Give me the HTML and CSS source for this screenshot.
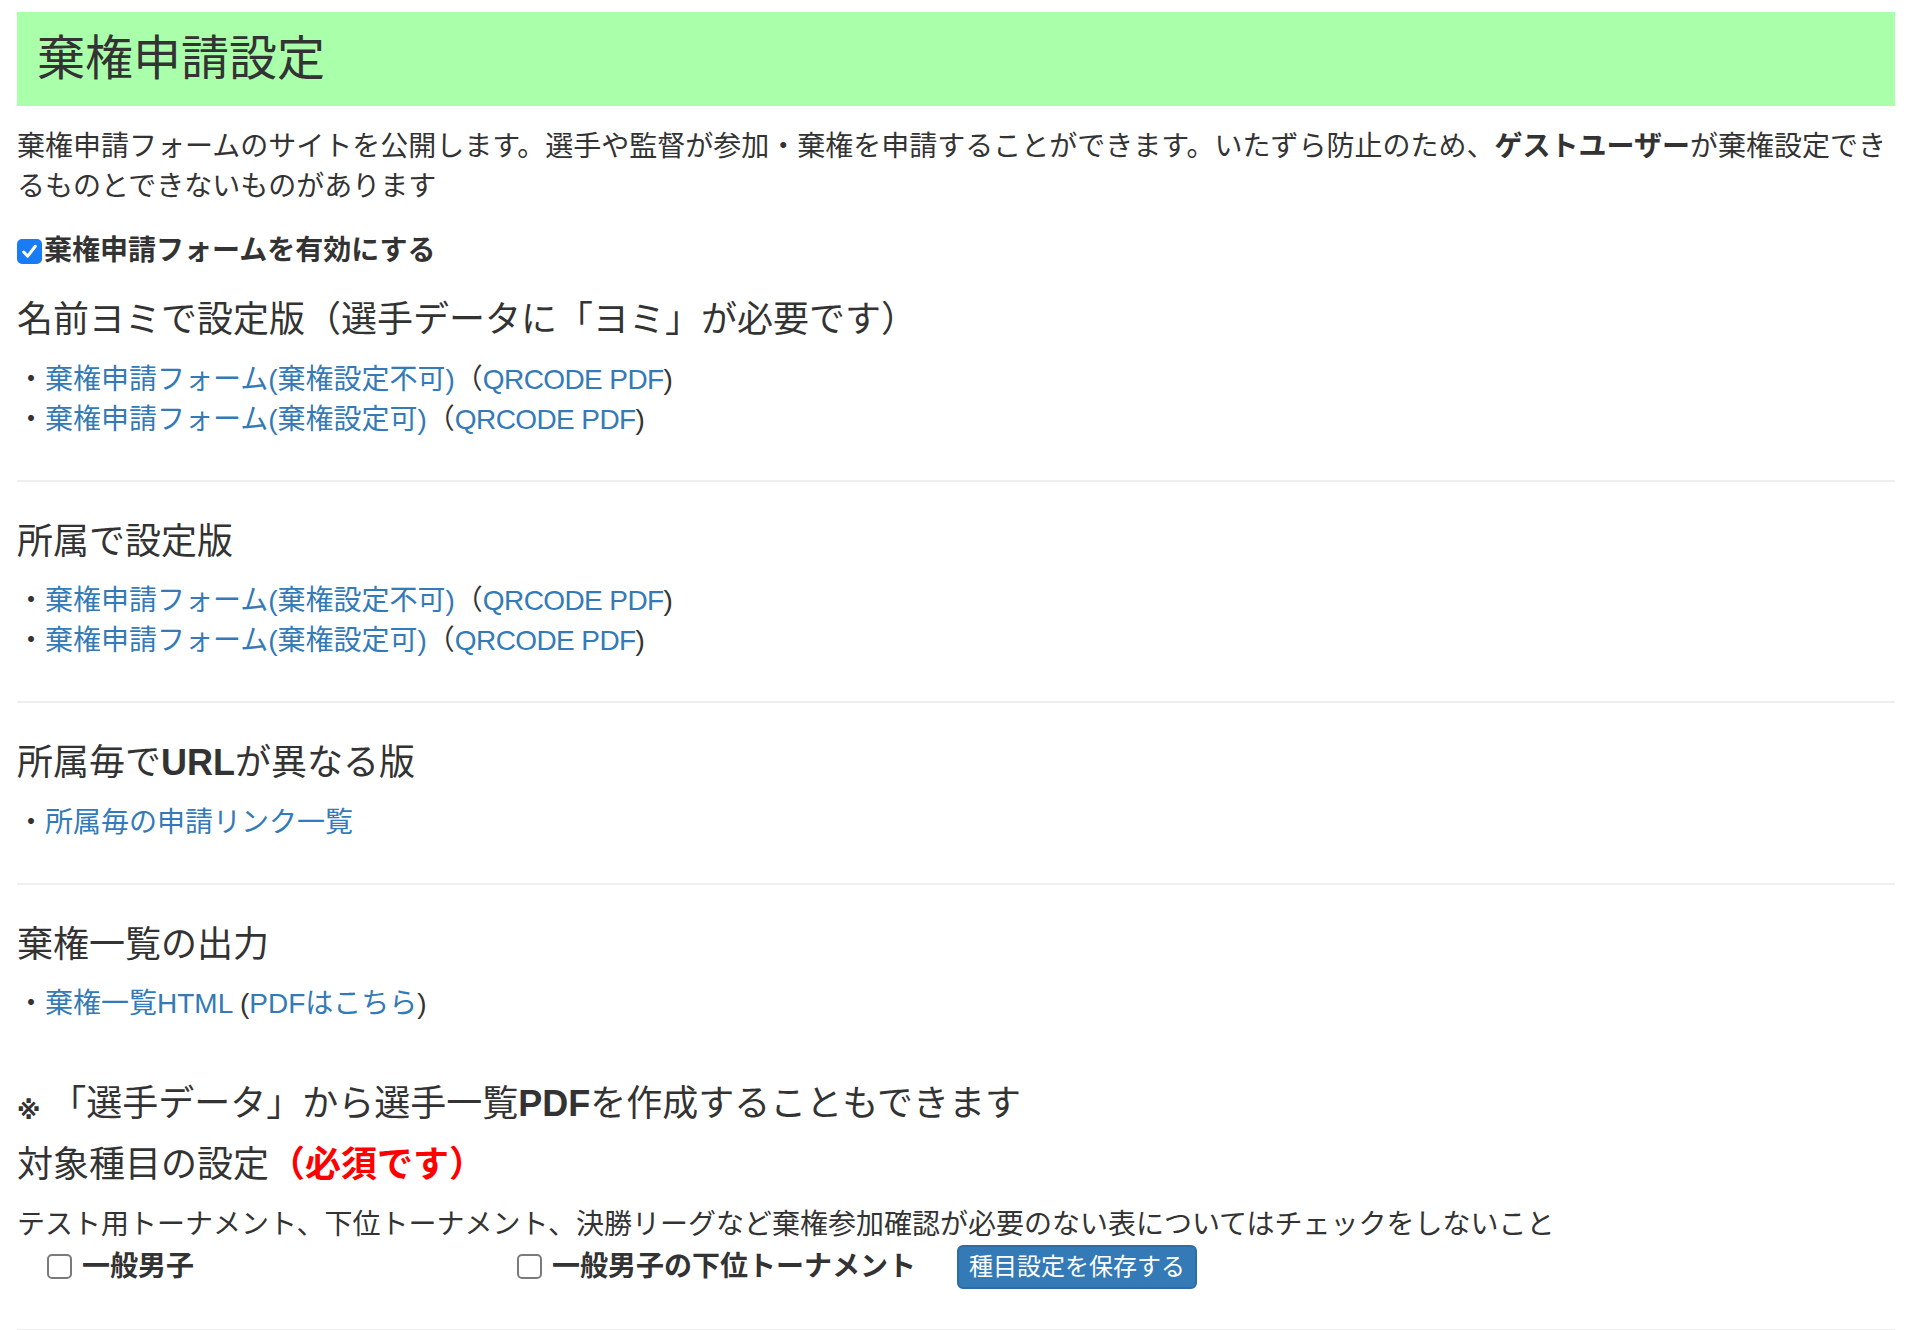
FILE: index.html
```html
<!DOCTYPE html>
<html lang="ja">
<head>
<meta charset="utf-8">
<title>棄権申請設定</title>
<link rel="stylesheet" href="styles.css">
</head>
<body>
<div class="page">
  <h1 class="title">棄権申請設定</h1>
  <p class="intro">棄権申請フォームのサイトを公開します。選手や監督が参加・棄権を申請することができます。いたずら防止のため、<b>ゲストユーザー</b>が棄権設定できるものとできないものがあります</p>
  <label class="enable"><input type="checkbox" class="cb" checked>棄権申請フォームを有効にする</label>

  <section class="sec first">
    <h3 class="sec-title">名前ヨミで設定版（選手データに「ヨミ」が必要です）</h3>
    <div class="links">
      <div>・<a href="#">棄権申請フォーム(棄権設定不可)</a>（<a href="#" class="en">QRCODE PDF</a>)</div>
      <div>・<a href="#">棄権申請フォーム(棄権設定可)</a>（<a href="#" class="en">QRCODE PDF</a>)</div>
    </div>
  </section>
  <hr class="rule">

  <section class="sec">
    <h3 class="sec-title">所属で設定版</h3>
    <div class="links">
      <div>・<a href="#">棄権申請フォーム(棄権設定不可)</a>（<a href="#" class="en">QRCODE PDF</a>)</div>
      <div>・<a href="#">棄権申請フォーム(棄権設定可)</a>（<a href="#" class="en">QRCODE PDF</a>)</div>
    </div>
  </section>
  <hr class="rule">

  <section class="sec">
    <h3 class="sec-title">所属毎で<span class="latin">URL</span>が異なる版</h3>
    <div class="links">
      <div>・<a href="#">所属毎の申請リンク一覧</a></div>
    </div>
  </section>
  <hr class="rule">

  <section class="sec">
    <h3 class="sec-title">棄権一覧の出力</h3>
    <div class="links">
      <div>・<a href="#">棄権一覧HTML</a> (<a href="#">PDFはこちら</a>)</div>
    </div>
  </section>

  <h3 class="note"><span class="kome">※</span> 「選手データ」から選手一覧<span class="latin">PDF</span>を作成することもできます</h3>
  <h3 class="target">対象種目の設定<span class="req">（必須です）</span></h3>
  <p class="hint">テスト用トーナメント、下位トーナメント、決勝リーグなど棄権参加確認が必要のない表についてはチェックをしないこと</p>
  <div class="items">
    <label class="item"><input type="checkbox" class="cb">一般男子</label>
    <label class="item"><input type="checkbox" class="cb">一般男子の下位トーナメント</label>
    <button class="btn" type="button">種目設定を保存する</button>
  </div>
  <hr class="rule">
</div>
</body>
</html>
```

FILE: styles.css
```css
html, body {
  margin: 0;
  padding: 0;
  background: #fff;
}

body {
  font-family: "Liberation Sans", "Noto Sans CJK JP", sans-serif;
  font-size: 28px;
  line-height: 40px;
  color: #333;
}

.page {
  padding: 12px 31px 0 17px;
}

.title {
  margin: 0 0 21px;
  padding: 20px 20px;
  background: #aaffaa;
  font-size: 48px;
  line-height: 54px;
  font-weight: 400;
  color: #333;
}

.intro {
  margin: 0 0 24px;
}

.intro b {
  font-weight: 700;
}

.enable {
  display: flex;
  align-items: center;
  font-weight: 700;
  height: 40px;
}

.enable .cb {
  margin: 0 2px 0 0;
}

.cb {
  appearance: none;
  -webkit-appearance: none;
  width: 25px;
  height: 25px;
  box-sizing: border-box;
  border: 2px solid #7a7a7a;
  border-radius: 5px;
  background: #fff;
  margin: 0;
  flex: none;
}

.cb:checked {
  border-color: #1a7cf5;
  background: #1a7cf5 url("data:image/svg+xml,%3Csvg xmlns='http://www.w3.org/2000/svg' viewBox='0 0 20 20'%3E%3Cpath d='M4.5 10.5l3.8 4L15.5 5' fill='none' stroke='%23fff' stroke-width='2.8' stroke-linecap='round' stroke-linejoin='round'/%3E%3C/svg%3E") center / 100% no-repeat;
}

.sec-title,
.note,
.target {
  font-size: 36px;
  line-height: 39.6px;
  font-weight: 400;
  margin: 40px 0 20px;
  color: #333;
}

.sec.first .sec-title {
  margin-top: 29px;
}

.latin {
  font-weight: 700;
}

a {
  color: #337ab7;
  text-decoration: none;
}

.en {
  letter-spacing: -0.6px;
}

.rule {
  margin: 40px 0;
  border: 0;
  border-top: 2px solid #eee;
  height: 0;
}

.note {
  margin: 60px 0 0;
}

.kome {
  font-family: "DejaVu Sans", "Noto Sans CJK JP", sans-serif;
  font-size: 24px;
  font-weight: 700;
  position: relative;
  top: 3px;
}

.target {
  margin: 16px 0 20px;
}

.req {
  color: #f00;
  font-weight: 700;
}

.hint {
  margin: 0;
}

.items {
  display: flex;
  align-items: center;
  margin-top: 0;
}

.item {
  width: 470px;
  box-sizing: border-box;
  padding-left: 30px;
  display: flex;
  align-items: center;
  font-weight: 700;
}

.item .cb {
  margin-right: 10px;
}

.btn {
  font-family: "Liberation Sans", "Noto Sans CJK JP", sans-serif;
  font-size: 24px;
  line-height: 36px;
  padding: 2px 10px;
  color: #fff;
  background: #337ab7;
  border: 2px solid #2e6da4;
  border-radius: 6px;
  cursor: pointer;
}
```
